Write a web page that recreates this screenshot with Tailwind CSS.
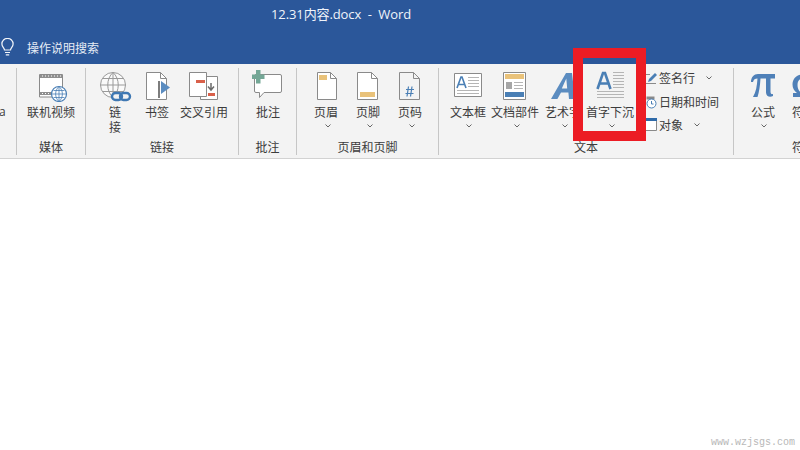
<!DOCTYPE html>
<html lang="zh">
<head>
<meta charset="utf-8">
<script src="https://cdn.jsdelivr.net/npm/@tailwindcss/browser@4"></script>
</head>
<body class="m-0 bg-white">
<div class="relative w-[800px] h-[450px] overflow-hidden flex flex-col bg-white text-[12px] leading-[18px] text-[#3c3c3c] font-['Noto_Sans_CJK_SC','Noto_Sans_CJK_SC',sans-serif]">

  <!-- Title + search -->
  <header class="h-[64px] bg-[#2b579a] text-white flex flex-col shrink-0">
    <div class="h-[29px] flex items-center pl-[271px] pb-[2px] text-[13px] tracking-[-0.1px] font-['Open_Sans','Noto_Sans_CJK_SC',sans-serif] whitespace-pre text-[#f0f4fa]">12.31内容.docx  -  Word</div>
    <div class="h-[35px] flex items-center pt-[3px] text-[#e6ecf5]">
      <svg class="w-[16px] h-[20px] shrink-0" viewBox="0 39 16 20" fill="none" stroke="#f2f5fa" stroke-width="1.2"><path d="M4.5 51c0-2-2.6-3-2.6-6a5.6 5.6 0 0 1 11.2 0c0 3-2.6 4-2.6 6z"/><path d="M5 53.5h5M5.8 55.8h3.4"/></svg>
      <span class="ml-[11px]">操作说明搜索</span>
    </div>
  </header>

  <!-- Ribbon -->
  <section class="h-[95px] shrink-0 bg-[#f3f3f3] border-b border-[#d2d2d2] flex overflow-hidden">
    <div class="w-[16px] shrink-0 pt-[39px] -ml-px font-['Open_Sans',sans-serif]">a</div>
    <div class="w-[1px] mt-[4px] mb-[3px] bg-[#c6c6c6] shrink-0 ml-px"></div>

    <!-- 媒体 -->
    <div class="w-[68px] shrink-0 flex flex-col">
      <div class="h-[74px] flex justify-center pt-[4px]">
        <div class="flex flex-col items-center whitespace-nowrap">
          <svg class="w-[34px] h-[34px]" viewBox="34 68 34 34" fill="none">
            <path d="M39.5 74.5h23v18h-4v4.500h-19z" fill="#fff" stroke="#8a8a8a"/>
            <path d="M40 75h22v3H40zM40 92h12v3H40z" fill="#8f8f8f"/>
            <path d="M42 76h1M45 76h1M48 76h1M51 76h1M54 76h1M57 76h1M60 76h1M42 93.500h1M45 93.500h1M48 93.500h1" stroke="#fff"/>
            <circle cx="59" cy="94" r="7.500" fill="#fff" stroke="#4a7fb5" stroke-width="1.200"/>
            <path d="M52 94h14M59 87v14M53.500 90.500h11M53.500 97.500h11M59 86.500c-4.500 4-4.500 11 0 15M59 86.500c4.500 4 4.500 11 0 15" stroke="#4a7fb5" stroke-width=".8"/>
          </svg>
          <span class="mt-px">联机视频</span>
        </div>
      </div>
      <div class="h-[18px] text-center">媒体</div>
    </div>
    <div class="w-[1px] mt-[4px] mb-[3px] bg-[#c6c6c6] shrink-0"></div>

    <!-- 链接 -->
    <div class="w-[152px] shrink-0 flex flex-col">
      <div class="h-[74px] flex pl-[8px] pt-[4px] whitespace-nowrap">
        <div class="w-[42px] flex flex-col items-center">
          <svg class="w-[34px] h-[34px]" viewBox="98 68 34 34" fill="none">
            <g stroke="#9a9a9a"><circle cx="113" cy="85" r="12.500" fill="#fafafa"/><path d="M100.500 85h25M113 72.500v25M102.500 78.500h21M102.500 91.500h21M113 72.500c-7 6-7 19 0 25M113 72.500c7 6 7 19 0 25"/></g>
            <g stroke="#3f78b3" stroke-width="2.400"><rect x="112" y="93" width="10" height="7" rx="3.500" fill="#f3f3f3"/><rect x="120" y="93" width="10" height="7" rx="3.500"/></g>
          </svg>
          <span class="mt-[2px] leading-[15px]">链</span><span class="leading-[15px]">接</span>
        </div>
        <div class="w-[42px] flex flex-col items-center">
          <svg class="w-[34px] h-[34px]" viewBox="140 68 34 34" fill="none">
            <path d="M146.500 72.500h14l6 6v21h-20z" fill="#fff" stroke="#8a8a8a"/><path d="M160.500 72.500v6h6" stroke="#8a8a8a"/>
            <path d="M158 81h2v17h-2z" fill="#7d7d7d"/><path d="M161 81l9 6.500-9 6.500z" fill="#5b8cc0"/>
          </svg>
          <span class="mt-px">书签</span>
        </div>
        <div class="w-[52px] flex flex-col items-center">
          <svg class="w-[34px] h-[34px]" viewBox="187 68 34 34" fill="none">
            <path d="M200.500 76.500h17v23h-17z" fill="#fff" stroke="#8a8a8a"/>
            <path d="M189.500 72.500h17v24h-17z" fill="#fff" stroke="#8a8a8a"/>
            <path d="M196 80h9v3h-9zM208 93h7v3h-7z" fill="#d9604a"/>
            <path d="M211 83v6M208 86.500l3 3.500 3-3.500" stroke="#6a6a6a" stroke-width="1.500"/>
          </svg>
          <span class="mt-px">交叉引用</span>
        </div>
      </div>
      <div class="h-[18px] text-center">链接</div>
    </div>
    <div class="w-[1px] mt-[4px] mb-[3px] bg-[#c6c6c6] shrink-0"></div>

    <!-- 批注 -->
    <div class="w-[57px] shrink-0 flex flex-col">
      <div class="h-[74px] flex justify-center pt-[4px]">
        <div class="ml-[1px] flex flex-col items-center whitespace-nowrap">
          <svg class="w-[34px] h-[34px]" viewBox="251 68 34 34" fill="none">
            <path d="M256 74.500h24a1.500 1.500 0 0 1 1.500 1.500v15a1.500 1.500 0 0 1-1.500 1.500h-16l-4.500 5v-5H256a1.500 1.500 0 0 1-1.500-1.500V76a1.500 1.500 0 0 1 1.500-1.500z" fill="#fff" stroke="#8a8a8a"/>
            <path d="M256 70h4.500v4.500H264.500v4.500H260.500v4.500H256V79h-4v-4.500h4z" fill="#74a796"/>
          </svg>
          <span class="mt-px">批注</span>
        </div>
      </div>
      <div class="h-[18px] text-center">批注</div>
    </div>
    <div class="w-[1px] mt-[4px] mb-[3px] bg-[#c6c6c6] shrink-0"></div>

    <!-- 页眉和页脚 -->
    <div class="w-[141px] shrink-0 flex flex-col">
      <div class="h-[74px] flex pl-[8px] pt-[4px] whitespace-nowrap">
        <div class="w-[42px] flex flex-col items-center">
          <svg class="w-[34px] h-[34px]" viewBox="309 68 34 34" fill="none">
            <path d="M317.500 72.500h13l6 6v21h-19z" fill="#fff" stroke="#8a8a8a"/><path d="M330.500 72.500v6h6" stroke="#8a8a8a"/>
            <path d="M319 75h8v5h-8z" fill="#e9c27a"/>
          </svg>
          <span class="mt-px">页眉</span>
          <svg class="w-[6px] h-[4px] mt-[3px] ml-[4px]" viewBox="0 0 6 4" fill="none" stroke="#666"><path d="M.5.500L3 3 5.500.500"/></svg>
        </div>
        <div class="w-[42px] flex flex-col items-center">
          <svg class="w-[34px] h-[34px]" viewBox="351 68 34 34" fill="none">
            <path d="M357.500 72.500h14l6 6v21h-20z" fill="#fff" stroke="#8a8a8a"/><path d="M371.500 72.500v6h6" stroke="#8a8a8a"/>
            <path d="M360 92h15v5h-15z" fill="#e9c27a"/>
          </svg>
          <span class="mt-px">页脚</span>
          <svg class="w-[6px] h-[4px] mt-[3px] ml-[4px]" viewBox="0 0 6 4" fill="none" stroke="#666"><path d="M.5.500L3 3 5.500.500"/></svg>
        </div>
        <div class="w-[42px] flex flex-col items-center">
          <svg class="w-[34px] h-[34px]" viewBox="393 68 34 34" fill="none">
            <path d="M408.500 86.500l-1.500 10M412 86.500l-1.500 10M406 89.500h8M405.500 93.500h8" stroke="#4a7fb5" stroke-width="1.200"/>
            <path d="M399.500 72.500h14l6 6v21h-20z" stroke="#8a8a8a"/><path d="M413.500 72.500v6h6" stroke="#8a8a8a"/>
          </svg>
          <span class="mt-px">页码</span>
          <svg class="w-[6px] h-[4px] mt-[3px] ml-[4px]" viewBox="0 0 6 4" fill="none" stroke="#666"><path d="M.5.500L3 3 5.500.500"/></svg>
        </div>
      </div>
      <div class="h-[18px] text-center">页眉和页脚</div>
    </div>
    <div class="w-[1px] mt-[4px] mb-[3px] bg-[#c6c6c6] shrink-0"></div>

    <!-- 文本 -->
    <div class="w-[294px] shrink-0 flex flex-col">
      <div class="h-[74px] flex pl-[6px] pt-[4px] whitespace-nowrap">
        <div class="w-[46px] flex flex-col items-center">
          <svg class="w-[34px] h-[34px]" viewBox="451 68 34 34" fill="none">
            <path d="M454.500 73.500h27v23h-27z" fill="#fff" stroke="#8a8a8a"/>
            <path d="M457 88l4-11h1l4 11M458.500 84.500h6" stroke="#4a7fb5" stroke-width="1.600"/>
            <path d="M468 77.500h11M468 80.500h11M468 83.500h11M468 86.500h11M457 90.500h22M457 93.500h22" stroke="#b5b5b5"/>
          </svg>
          <span class="mt-px">文本框</span>
          <svg class="w-[6px] h-[4px] mt-[3px] ml-[2px]" viewBox="0 0 6 4" fill="none" stroke="#666"><path d="M.5.500L3 3 5.500.500"/></svg>
        </div>
        <div class="w-[46px] ml-[1px] flex flex-col items-center">
          <svg class="w-[34px] h-[34px]" viewBox="498 68 34 34" fill="none">
            <path d="M503.500 72.500h22v27h-22z" fill="#fff" stroke="#8a8a8a"/>
            <path d="M505 74h19v5h-19z" fill="#e9c27a"/><path d="M506 82h6v7h-6z" fill="#a6a6a6"/>
            <path d="M514 82.500h9M514 85.500h9M514 88.500h9" stroke="#b5b5b5"/>
            <path d="M505 92h19v5h-19z" fill="#4a7fb5"/>
          </svg>
          <span class="mt-px">文档部件</span>
          <svg class="w-[6px] h-[4px] mt-[3px] ml-[4px]" viewBox="0 0 6 4" fill="none" stroke="#666"><path d="M.5.500L3 3 5.500.500"/></svg>
        </div>
        <div class="w-[46px] ml-[2px] flex flex-col items-center">
          <svg class="w-[34px] h-[34px]" viewBox="546 68 34 34" fill="none">
            <path d="M551 99l15-26h6l3 26h-6l-.6-6.500h-7.400l-3.600 6.500zM561.800 88.500h5.400l-.9-10z" fill="#5b8cc0" fill-rule="evenodd"/>
          </svg>
          <span class="mt-px">艺术字</span>
          <svg class="w-[6px] h-[4px] mt-[3px] ml-[4px]" viewBox="0 0 6 4" fill="none" stroke="#666"><path d="M.5.500L3 3 5.500.500"/></svg>
        </div>
        <div class="w-[40px] ml-[4px] flex flex-col items-center">
          <svg class="w-[34px] h-[34px]" viewBox="593 68 34 34" fill="none">
            <path d="M597.500 89l5.500-16h2l5.500 16M600 83.500h8" stroke="#4a7fb5" stroke-width="2.600"/>
            <path d="M613 72.500h11M613 75.500h11M613 78.500h11M613 81.500h11M613 84.500h11M613 87.500h11M597 91.500h27M597 94.500h27M597 97.500h27" stroke="#b5b5b5"/>
          </svg>
          <span class="mt-px">首字下沉</span>
          <svg class="w-[6px] h-[4px] mt-[3px] ml-[4px]" viewBox="0 0 6 4" fill="none" stroke="#666"><path d="M.5.500L3 3 5.500.500"/></svg>
        </div>
        <div class="ml-[15px] flex flex-col gap-[5.500px] pt-[1px]">
          <div class="h-[18px] flex items-center">
            <svg class="w-[13px] h-[14px] shrink-0" viewBox="645 71 13 14" fill="none"><path d="M646 74.500h4M646 83.500h10" stroke="#8a8a8a"/><path d="M648 82l1-3 6-6 2 2-6 6z" fill="#4a7fb5"/></svg>
            <span class="ml-px">签名行</span>
            <svg class="w-[6px] h-[4px] ml-[11px]" viewBox="0 0 6 4" fill="none" stroke="#666"><path d="M.5.500L3 3 5.500.500"/></svg>
          </div>
          <div class="h-[18px] flex items-center">
            <svg class="w-[13px] h-[14px] shrink-0" viewBox="645 95 13 14" fill="none"><path d="M646.500 96.500h8v3h-8z" fill="#8a8a8a"/><circle cx="651.500" cy="103.500" r="4.500" fill="#fff" stroke="#4a7fb5"/><path d="M651.500 101v3h2" stroke="#4a7fb5"/></svg>
            <span class="ml-px">日期和时间</span>
          </div>
          <div class="h-[18px] flex items-center">
            <svg class="w-[13px] h-[14px] shrink-0" viewBox="645 118 13 14" fill="none"><path d="M645.500 118.500h11v12h-11z" fill="#fff" stroke="#8a8a8a"/><path d="M645 118h12v3h-12z" fill="#2f6aa8"/></svg>
            <span class="ml-px">对象</span>
            <svg class="w-[6px] h-[4px] ml-[11px]" viewBox="0 0 6 4" fill="none" stroke="#666"><path d="M.5.500L3 3 5.500.500"/></svg>
          </div>
        </div>
      </div>
      <div class="h-[18px] text-center">文本</div>
    </div>
    <div class="w-[1px] mt-[4px] mb-[3px] bg-[#c6c6c6] shrink-0"></div>

    <!-- 符号 -->
    <div class="w-[100px] shrink-0 flex flex-col">
      <div class="h-[74px] flex pl-[12px] pt-[4px] whitespace-nowrap">
        <div class="w-[34px] flex flex-col items-center">
          <svg class="w-[34px] h-[34px]" viewBox="746 68 34 34" fill="none">
            <path d="M751 82c0-5 3-8 7-8h17v4.500h-4.500v13c0 2 .8 3 2.500 2.500v2c-3 1.500-7 .5-7-3.500V78.500h-5.500c-.5 8-1.500 14-3 18.500h-4.500c3-5 4-11 4.500-18.500-2.500 0-4 1-4.500 3.500z" fill="#4f80b8"/>
          </svg>
          <span class="mt-px">公式</span>
          <svg class="w-[6px] h-[4px] mt-[3px] ml-[2px]" viewBox="0 0 6 4" fill="none" stroke="#666"><path d="M.5.500L3 3 5.500.500"/></svg>
        </div>
        <div class="w-[34px] ml-[1px] flex flex-col items-center">
          <svg class="w-[34px] h-[34px]" viewBox="781 68 34 34" fill="none">
            <path d="M793 97v-4h4c-3-2-4.500-5-4.500-8.500 0-6 4.500-10 10-10s10 4 10 10c0 3.500-1.500 6.500-4.500 8.500h4v4h-8.500v-4c2.500-1.500 4-4.500 4-8 0-4-2-6.500-5-6.500s-5 2.500-5 6.500c0 3.500 1.500 6.500 4 8v4z" fill="#4f80b8"/>
          </svg>
          <span class="mt-px ml-[12px]">符号</span>
        </div>
      </div>
      <div class="h-[18px] pl-[58px]">符号</div>
    </div>
  </section>

  <!-- Document + watermark -->
  <main class="flex-1 flex items-end justify-end pr-[5px] bg-white">
    <span class="text-[10px] leading-[14px] text-[#b8b8b8] font-['Liberation_Mono',monospace]">www.wzjsgs.com</span>
  </main>

  <!-- Red annotation -->
  <div class="absolute left-[573px] top-[48px] w-[73px] h-[93px] border-[10px] border-[#ec1c24]"></div>
</div>
</body>
</html>
